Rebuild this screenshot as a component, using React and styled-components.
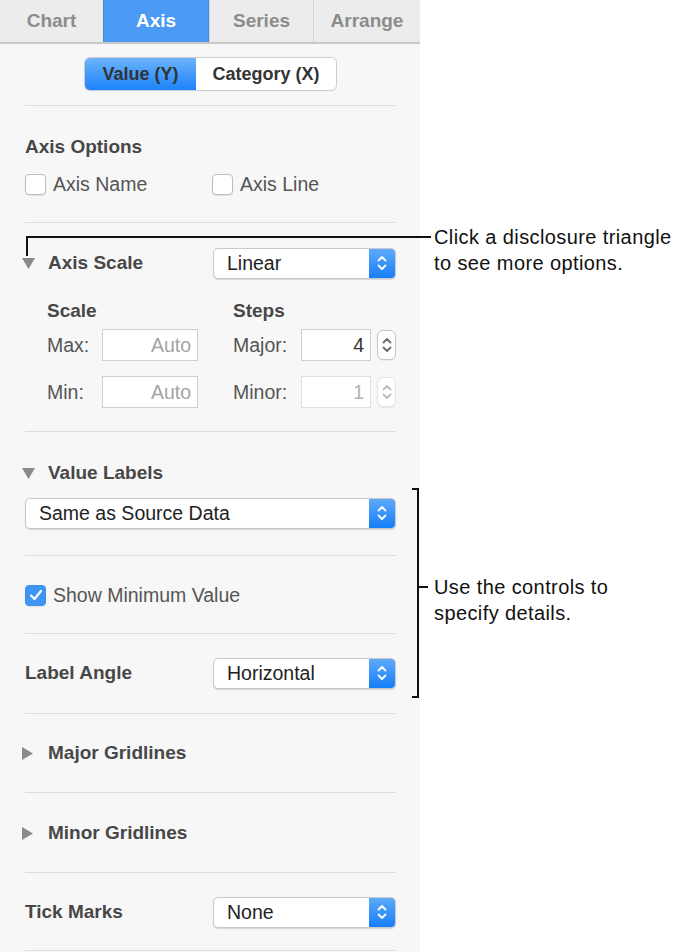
import styled, { createGlobalStyle } from "styled-components";

const GlobalStyle = createGlobalStyle`
  html, body {
    margin: 0;
    padding: 0;
    background: #ffffff;
  }
  body {
    font-family: "Liberation Sans", Arial, sans-serif;
    -webkit-font-smoothing: antialiased;
  }
`;

const Page = styled.div`
  position: relative;
  width: 682px;
  height: 952px;
  overflow: hidden;
  background: #fff;
`;

const Panel = styled.div`
  width: 420px;
  height: 952px;
  background: #f7f7f7;
  display: flex;
  flex-direction: column;
  & > * {
    flex-shrink: 0;
  }
`;

const TabBar = styled.div`
  display: flex;
  height: 42px;
  background: #ececec;
  border-bottom: 2px solid #c8c8c8;
`;

const Tab = styled.div`
  width: ${(p) => p.$w}px;
  display: flex;
  align-items: center;
  justify-content: center;
  font-size: 19px;
  font-weight: bold;
  color: ${(p) => (p.$active ? "#ffffff" : "#8c8c8c")};
  background: ${(p) => (p.$active ? "#4b9bf5" : "transparent")};
  border-left: 1px solid ${(p) => (p.$active ? "#3f88dc" : "#d6d6d6")};
  border-right: ${(p) => (p.$active ? "1px solid #3f88dc" : "none")};
  box-sizing: border-box;
  &:first-child {
    border-left: none;
  }
`;

const SegmentRow = styled.div`
  display: flex;
  justify-content: center;
  padding: 14px 0 15px;
  padding-left: 1px;
`;

const Segmented = styled.div`
  display: flex;
  height: 32px;
  border-radius: 5px;
  box-shadow: 0 0 0 1px #cdcdcd, 0 1px 1px rgba(0, 0, 0, 0.12);
  overflow: hidden;
`;

const Segment = styled.div`
  width: ${(p) => p.$w}px;
  display: flex;
  align-items: center;
  justify-content: center;
  font-size: 18px;
  font-weight: bold;
  color: #333;
  background: ${(p) =>
    p.$active ? "linear-gradient(#6db4fb, #1c83fb)" : "#ffffff"};
`;

const Divider = styled.div`
  height: 1px;
  margin: 0 24px 0 25px;
  background: #dcdcdc;
`;

const Section = styled.div`
  display: flex;
  flex-direction: column;
  padding: ${(p) => p.$pt}px 24px ${(p) => p.$pb}px 25px;
`;

const Row = styled.div`
  display: flex;
  align-items: center;
  height: 32px;
  margin-top: ${(p) => p.$mt || 0}px;
`;

const Heading = styled.div`
  font-size: 19px;
  font-weight: bold;
  color: #474747;
  grid-column: ${(p) => p.$col || "auto"};
`;

const Disclosure = styled.div`
  display: flex;
  align-items: center;
  width: 188px;
  margin-left: -3px;
`;

const TriangleBox = styled.span`
  display: inline-flex;
  width: 26px;
  align-items: center;
`;

const CheckItem = styled.label`
  display: flex;
  align-items: center;
  gap: 7px;
  width: ${(p) => (p.$w ? `${p.$w}px` : "auto")};
  font-size: 19.5px;
  color: #555;
`;

const Box = styled.span`
  width: 21px;
  height: 21px;
  box-sizing: border-box;
  border-radius: 4px;
  border: 1px solid ${(p) => (p.$checked ? "#3a8ff0" : "#bdbdbd")};
  background: ${(p) => (p.$checked ? "#3f95f3" : "#ffffff")};
  box-shadow: 0 1px 1px rgba(0, 0, 0, 0.08);
  display: flex;
  align-items: center;
  justify-content: center;
`;

const Select = styled.div`
  width: ${(p) => p.$w}px;
  height: 31px;
  box-sizing: border-box;
  display: flex;
  background: #fff;
  border: 1px solid #c9c9c9;
  border-radius: 5px;
  box-shadow: 0 1px 1px rgba(0, 0, 0, 0.14);
  overflow: hidden;
  margin-left: auto;
`;

const SelectText = styled.div`
  flex: 1;
  display: flex;
  align-items: center;
  padding-left: 13px;
  font-size: 19.5px;
  color: #222;
`;

const SelectArrows = styled.div`
  width: 26px;
  display: flex;
  align-items: center;
  justify-content: center;
  background: linear-gradient(#5eaafb, #167ef9);
`;

const ScaleGrid = styled.div`
  display: grid;
  grid-template-columns: 55px 96px 35px 68px 70px 6px 19px;
  grid-template-rows: 32px 32px 32px;
  row-gap: 0;
  padding-left: 22px;
  margin-top: 16px;
  align-items: center;
  grid-template-rows: 32px 2px 32px 15px 32px;
`;

const FieldLabel = styled.div`
  font-size: 19.5px;
  color: #555;
  grid-column: ${(p) => p.$col};
`;

const Field = styled.div`
  grid-column: ${(p) => p.$col};
  height: 32px;
  box-sizing: border-box;
  border: 1px solid ${(p) => (p.$disabled ? "#e0e0e0" : "#cfcfcf")};
  background: #fff;
  display: flex;
  align-items: center;
  justify-content: flex-end;
  padding-right: 6px;
  font-size: 19.5px;
  color: ${(p) => p.$color};
`;

const Stepper = styled.div`
  grid-column: 7;
  height: 30px;
  box-sizing: border-box;
  border: 1px solid ${(p) => (p.$disabled ? "#e3e3e3" : "#c6c6c6")};
  border-radius: 6px;
  background: #fff;
  box-shadow: 0 1px 1px rgba(0, 0, 0, 0.06);
  display: flex;
  align-items: center;
  justify-content: center;
`;

const GridGap = styled.div`
  grid-column: 1 / -1;
`;

const Callout = styled.div`
  position: absolute;
  left: ${(p) => p.$x}px;
  top: ${(p) => p.$y}px;
  font-size: 20px;
  letter-spacing: 0.4px;
  line-height: 26px;
  color: #111;
  white-space: nowrap;
`;

const Leader = styled.div`
  position: absolute;
  left: ${(p) => p.$x}px;
  top: ${(p) => p.$y}px;
  width: ${(p) => p.$w}px;
  height: ${(p) => p.$h}px;
  background: #111;
`;

function Chevrons({ color = "#fff" }) {
  return (
    <svg width="12" height="20" viewBox="0 0 12 20" fill="none">
      <path d="M2.5 7.5 L6 4 L9.5 7.5" stroke={color} strokeWidth="1.8" strokeLinecap="round" strokeLinejoin="round" />
      <path d="M2.5 12.5 L6 16 L9.5 12.5" stroke={color} strokeWidth="1.8" strokeLinecap="round" strokeLinejoin="round" />
    </svg>
  );
}

function Triangle({ open }) {
  return open ? (
    <svg width="13" height="11" viewBox="0 0 13 11">
      <path d="M0 0 H13 L6.5 11 Z" fill="#8a8a8a" />
    </svg>
  ) : (
    <svg width="11" height="13" viewBox="0 0 11 13">
      <path d="M0 0 L11 6.5 L0 13 Z" fill="#8a8a8a" />
    </svg>
  );
}

function Checkbox({ label, checked, w }) {
  return (
    <CheckItem $w={w}>
      <Box $checked={checked}>
        {checked && (
          <svg width="14" height="12" viewBox="0 0 14 12">
            <path d="M2 6.5 L5.5 10 L12 2" stroke="#fff" strokeWidth="2.2" fill="none" strokeLinecap="round" strokeLinejoin="round" />
          </svg>
        )}
      </Box>
      {label}
    </CheckItem>
  );
}

function PopUp({ value, width = 183 }) {
  return (
    <Select $w={width}>
      <SelectText>{value}</SelectText>
      <SelectArrows>
        <Chevrons />
      </SelectArrows>
    </Select>
  );
}

function DisclosureTitle({ open, children }) {
  return (
    <Disclosure>
      <TriangleBox>
        <Triangle open={open} />
      </TriangleBox>
      <Heading>{children}</Heading>
    </Disclosure>
  );
}

const tabs = [
  { name: "Chart", w: 103 },
  { name: "Axis", w: 106 },
  { name: "Series", w: 104 },
  { name: "Arrange", w: 107 },
];

export default function App() {
  return (
    <>
      <GlobalStyle />
      <Page>
        <Panel>
          <TabBar>
            {tabs.map((t) => (
              <Tab key={t.name} $w={t.w} $active={t.name === "Axis"}>
                {t.name}
              </Tab>
            ))}
          </TabBar>

          <SegmentRow>
            <Segmented>
              <Segment $w={111} $active>
                Value (Y)
              </Segment>
              <Segment $w={140}>Category (X)</Segment>
            </Segmented>
          </SegmentRow>
          <Divider />

          <Section $pt={25} $pb={22}>
            <Row>
              <Heading>Axis Options</Heading>
            </Row>
            <Row $mt={5}>
              <Checkbox label="Axis Name" w={187} />
              <Checkbox label="Axis Line" />
            </Row>
          </Section>
          <Divider />

          <Section $pt={24} $pb={23}>
            <Row>
              <DisclosureTitle open>Axis Scale</DisclosureTitle>
              <PopUp value="Linear" />
            </Row>
            <ScaleGrid>
              <Heading $col="1 / 3">Scale</Heading>
              <Heading $col="4 / 6">Steps</Heading>
              <GridGap />
              <FieldLabel $col={1}>Max:</FieldLabel>
              <Field $col={2} $color="#a3a3a3">Auto</Field>
              <FieldLabel $col={4}>Major:</FieldLabel>
              <Field $col={5} $color="#333">4</Field>
              <Stepper>
                <Chevrons color="#6b6b6b" />
              </Stepper>
              <GridGap />
              <FieldLabel $col={1}>Min:</FieldLabel>
              <Field $col={2} $color="#a3a3a3">Auto</Field>
              <FieldLabel $col={4}>Minor:</FieldLabel>
              <Field $col={5} $color="#b3b3b3" $disabled>1</Field>
              <Stepper $disabled>
                <Chevrons color="#bdbdbd" />
              </Stepper>
            </ScaleGrid>
          </Section>
          <Divider />

          <Section $pt={25} $pb={26}>
            <Row>
              <DisclosureTitle open>Value Labels</DisclosureTitle>
            </Row>
            <Row $mt={8}>
              <PopUp value="Same as Source Data" width={371} />
            </Row>
          </Section>
          <Divider />

          <Section $pt={23} $pb={22}>
            <Row>
              <Checkbox label="Show Minimum Value" checked />
            </Row>
          </Section>
          <Divider />

          <Section $pt={23} $pb={24}>
            <Row>
              <Heading>Label Angle</Heading>
              <PopUp value="Horizontal" />
            </Row>
          </Section>
          <Divider />

          <Section $pt={23} $pb={23}>
            <Row>
              <DisclosureTitle>Major Gridlines</DisclosureTitle>
            </Row>
          </Section>
          <Divider />

          <Section $pt={24} $pb={23}>
            <Row>
              <DisclosureTitle>Minor Gridlines</DisclosureTitle>
            </Row>
          </Section>
          <Divider />

          <Section $pt={23} $pb={22}>
            <Row>
              <Heading>Tick Marks</Heading>
              <PopUp value="None" />
            </Row>
          </Section>
          <Divider />
        </Panel>

        {/* callout: disclosure triangle */}
        <Leader $x={26} $y={236} $w={405} $h={2} />
        <Leader $x={26} $y={236} $w={2} $h={20} />
        <Callout $x={434} $y={224}>
          Click a disclosure triangle
          <br />
          to see more options.
        </Callout>

        {/* callout: bracket */}
        <Leader $x={417} $y={488} $w={2} $h={210} />
        <Leader $x={412} $y={488} $w={6} $h={2} />
        <Leader $x={412} $y={696} $w={6} $h={2} />
        <Leader $x={417} $y={586} $w={11} $h={2} />
        <Callout $x={434} $y={574}>
          Use the controls to
          <br />
          specify details.
        </Callout>
      </Page>
    </>
  );
}
